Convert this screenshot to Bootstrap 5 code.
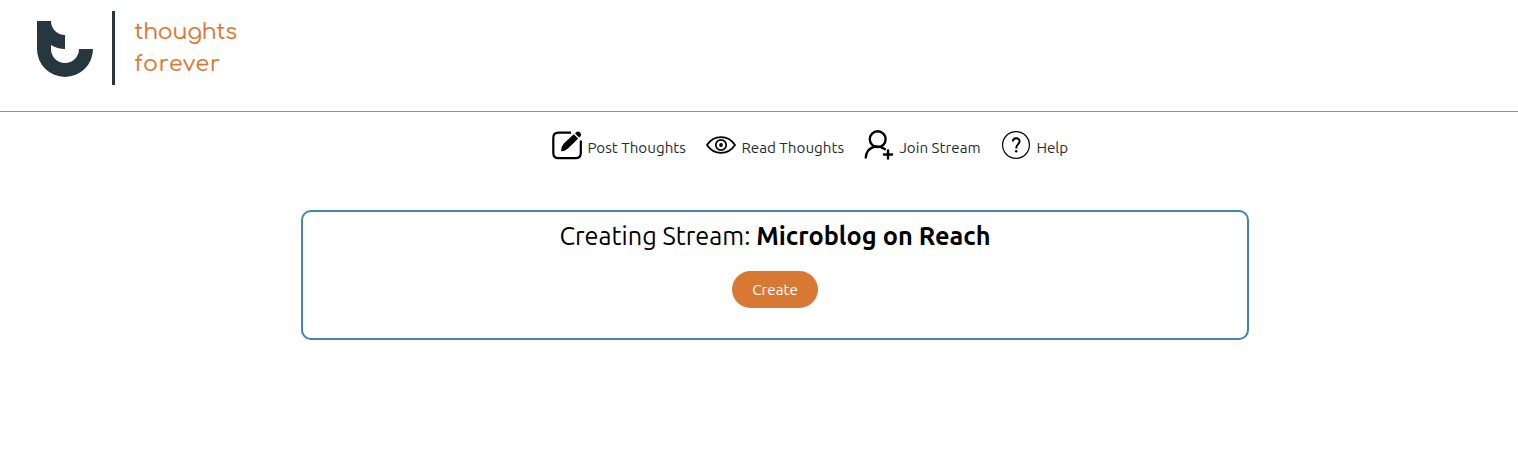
<!DOCTYPE html>
<html lang="en">
<head>
<meta charset="utf-8">
<meta name="viewport" content="width=device-width, initial-scale=1">
<title>Thoughts Forever</title>
<link href="https://cdn.jsdelivr.net/npm/bootstrap@5.3.0/dist/css/bootstrap.min.css" rel="stylesheet">
<style>
body{font-family:Ubuntu,"Noto Sans",sans-serif;font-size:15.2px;color:#000;background:#fff}
.site-header{height:112px;border-bottom:1px solid #929292}
.logo{width:250px;height:100px}
.site-nav{padding-left:552px;padding-top:18px;height:98px}
.site-nav .nav-link{height:30px;color:#1f2d35;white-space:nowrap;padding:0;gap:5.4px}
.site-nav svg{width:30px;height:30px;flex:none}
.nav-label{line-height:20px;margin-top:8px;font-size:15.2px}
.post{width:154px}.read{width:158px}.join{width:137px}
.stream-card{width:948px;height:130px;margin-left:301px;border:2px solid #4682b4;border-radius:10px}
.stream-title{font-size:25.33px;line-height:30px;margin:9px 0 20px;font-weight:400;white-space:nowrap}
.create{width:86px;height:37px;background:#d77933;color:#fff;border:0;border-radius:20px;font-size:15.2px;padding:2px 0 0}
</style>
</head>
<body>
<header class="site-header">
<a href="#" class="d-block logo" aria-label="Thoughts forever">
<svg class="d-block" width="250" height="100" viewBox="0 0 250 100">
<path fill="#27373f" d="M37 21H51A14 14 0 0 0 65 35V49A28 28 0 0 1 51 45V49A14 14 0 0 0 79 49H93A28 28 0 0 1 37 49Z"/>
<path fill="#27373f" d="M112 11h3v74h-3z"/>
<g fill="#d77933" stroke="#d77933" stroke-width=".2" font-family="Comfortaa,Lato,sans-serif" font-size="22">
<text x="134.5" y="38.5" textLength="102.5">thoughts</text>
<text x="134.5" y="70.5" textLength="85.5">forever</text>
</g>
</svg>
</a>
</header>
<nav class="site-nav nav d-flex flex-nowrap align-items-start">
<a href="#" class="nav-link d-flex post">
<svg viewBox="0 0 30 30"><path d="M19 2.6H6.5Q1.3 2.6 1.3 7.8V23Q1.3 28.2 6.5 28.2H23.5Q28.8 28.2 28.8 23V10.5" fill="none" stroke="#000" stroke-width="2.2"/><path d="M9 21.2Q9 16.5 12 13.2L21.8 4.2L26.2 8.5L16 18.4Q13 21.2 9 21.2ZM23 3.4L24.8 1.8Q26.2.9 28 2.4T28.7 5.9L27.2 7.5Z"/></svg>
<span class="nav-label">Post Thoughts</span></a>
<a href="#" class="nav-link d-flex read">
<svg viewBox="0 0 30 30" fill="none" stroke="#000"><path stroke-width="1.8" d="M1 15C8 4.5 22 4.5 29 15C22 25.5 8 25.5 1 15Z"/><circle cx="15" cy="15" r="5.2" stroke-width="1.7"/><circle cx="15" cy="15" r="1.9" fill="#000" stroke="none"/></svg>
<span class="nav-label">Read Thoughts</span></a>
<a href="#" class="nav-link d-flex join">
<svg viewBox="0 0 30 30" fill="none" stroke="#000" stroke-width="2.4" stroke-linecap="round"><circle cx="13.7" cy="9.2" r="7.9"/><path d="M1.8 27.5C2.5 17 13 13.8 21 19.2M24 20.5v8M20 24.5h8"/></svg>
<span class="nav-label">Join Stream</span></a>
<a href="#" class="nav-link d-flex help">
<svg viewBox="0 0 30 30" fill="none" stroke="#000"><circle cx="15" cy="15" r="13.4" stroke-width="1.2"/><path d="M11.8 11.6C11.8 7.2 18.6 7.2 18.6 11.2C18.6 14 15.2 14.4 15.2 18.4" stroke-width="1.9"/><circle cx="15.2" cy="21.3" r="1.2" fill="#000" stroke="none"/></svg>
<span class="nav-label">Help</span></a>
</nav>
<main class="stream-card text-center">
<h1 class="stream-title">Creating Stream: <strong>Microblog on Reach</strong></h1>
<button type="button" class="btn create">Create</button>
</main>
<script src="https://cdn.jsdelivr.net/npm/bootstrap@5.3.0/dist/js/bootstrap.bundle.min.js"></script>
</body>
</html>
